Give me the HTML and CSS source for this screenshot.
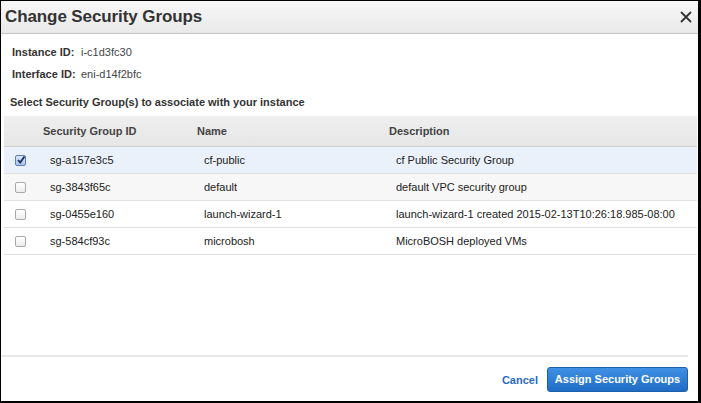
FILE: index.html
```html
<!DOCTYPE html>
<html>
<head>
<meta charset="utf-8">
<link rel="stylesheet" href="styles.css">
</head>
<body>
<div class="dialog">
  <div class="header">
    <h1 class="title">Change Security Groups</h1>
    <svg class="close" width="12" height="12" viewBox="0 0 12 12"><path d="M1.5 1.5 L10.5 10.5 M10.5 1.5 L1.5 10.5" stroke="#333" stroke-width="1.8" stroke-linecap="round"/></svg>
  </div>
  <div class="info">
    <div class="info-row"><span class="label">Instance ID:</span><span class="value">i-c1d3fc30</span></div>
    <div class="info-row"><span class="label">Interface ID:</span><span class="value">eni-d14f2bfc</span></div>
    <div class="select-label">Select Security Group(s) to associate with your instance</div>
  </div>
  <div class="table">
    <div class="thead">
      <div></div><div>Security Group ID</div><div>Name</div><div>Description</div>
    </div>
    <div class="row selected">
      <div class="cb-cell"><span class="cb checked"><svg width="10" height="10" viewBox="0 0 10 10"><path d="M2 5 L4.2 7.5 L8.5 1.5" fill="none" stroke="#1a2f5a" stroke-width="1.8"/></svg></span></div>
      <div>sg-a157e3c5</div><div>cf-public</div><div>cf Public Security Group</div>
    </div>
    <div class="row alt">
      <div class="cb-cell"><span class="cb"></span></div>
      <div>sg-3843f65c</div><div>default</div><div>default VPC security group</div>
    </div>
    <div class="row">
      <div class="cb-cell"><span class="cb"></span></div>
      <div>sg-0455e160</div><div>launch-wizard-1</div><div>launch-wizard-1 created 2015-02-13T10:26:18.985-08:00</div>
    </div>
    <div class="row">
      <div class="cb-cell"><span class="cb"></span></div>
      <div>sg-584cf93c</div><div>microbosh</div><div>MicroBOSH deployed VMs</div>
    </div>
  </div>
  <div class="spacer"></div>
  <div class="footer">
    <a class="cancel">Cancel</a>
    <button class="assign">Assign Security Groups</button>
  </div>
</div>
</body>
</html>
```
FILE: styles.css
```css
html, body { margin: 0; padding: 0; }
body {
  background: #000;
  width: 701px;
  height: 403px;
  font-family: "Liberation Sans", Arial, sans-serif;
  color: #333;
  overflow: hidden;
}
.dialog {
  margin: 1px 3px 2px 1px;
  height: 400px;
  background: #fff;
  display: flex;
  flex-direction: column;
}
.header {
  height: 32px;
  flex: none;
  display: flex;
  align-items: center;
  justify-content: space-between;
  padding: 0 6px 0 4px;
  background: linear-gradient(#f7f7f7, #e9e9e9);
  border-bottom: 1px solid #c4c4c4;
}
.title {
  margin: 0;
  font-size: 17px;
  font-weight: bold;
  color: #333;
  letter-spacing: -0.1px;
}
.close { display: block; }
.info {
  padding: 7px 0 0 11px;
  font-size: 11px;
}
.info-row {
  height: 22px;
  display: flex;
  align-items: center;
}
.label { font-weight: bold; color: #333; width: 69px; }
.value { color: #444; }
.select-label {
  font-weight: bold;
  margin: 6px 0 0 -2px;
  height: 22px;
  line-height: 22px;
  color: #333;
}
.table {
  margin: 3px 1px 0 3px;
  font-size: 11px;
}
.thead, .row {
  display: grid;
  grid-template-columns: 39px 154px 192px 1fr;
  align-items: center;
}
.thead {
  height: 30px;
  background: linear-gradient(#efefef, #e6e6e6);
  border-bottom: 1px solid #cfcfcf;
  font-weight: bold;
  color: #444;
}
.row {
  height: 26px;
  border-bottom: 1px solid #e1e1e1;
  color: #222;
}
.row > div:not(.cb-cell) { padding-left: 7px; }
.row.selected { background: #eaf1fb; }
.row.alt { background: #f7f7f7; }
.cb-cell { display: flex; padding-left: 11px; }
.cb {
  width: 9px;
  height: 9px;
  border: 1px solid #a9a9a9;
  border-radius: 2px;
  background: linear-gradient(#fff, #ededed);
  position: relative;
}
.cb.checked {
  border-color: #5b7fb8;
  background: linear-gradient(#dbe7fa, #a9c4ee);
}
.cb svg { position: absolute; left: 0; top: -1px; }
.spacer { flex: 1; }
.footer {
  height: 44px;
  flex: none;
  border-top: 2px solid #e8e8e8;
  margin-right: 10px;
  display: flex;
  align-items: center;
  justify-content: flex-end;
  gap: 9px;
  padding-top: 0;
}
.cancel {
  font-size: 11px;
  font-weight: bold;
  color: #2a6ac0;
  margin-top: 2px;
}
.assign {
  width: 141px;
  height: 25px;
  margin-top: 0;
  border: 1px solid #1c5fad;
  border-radius: 3px;
  background: linear-gradient(#3f91e4, #1f6cc4);
  color: #fff;
  font-family: "Liberation Sans", Arial, sans-serif;
  font-size: 11px;
  font-weight: bold;
  padding: 0;
}
```
